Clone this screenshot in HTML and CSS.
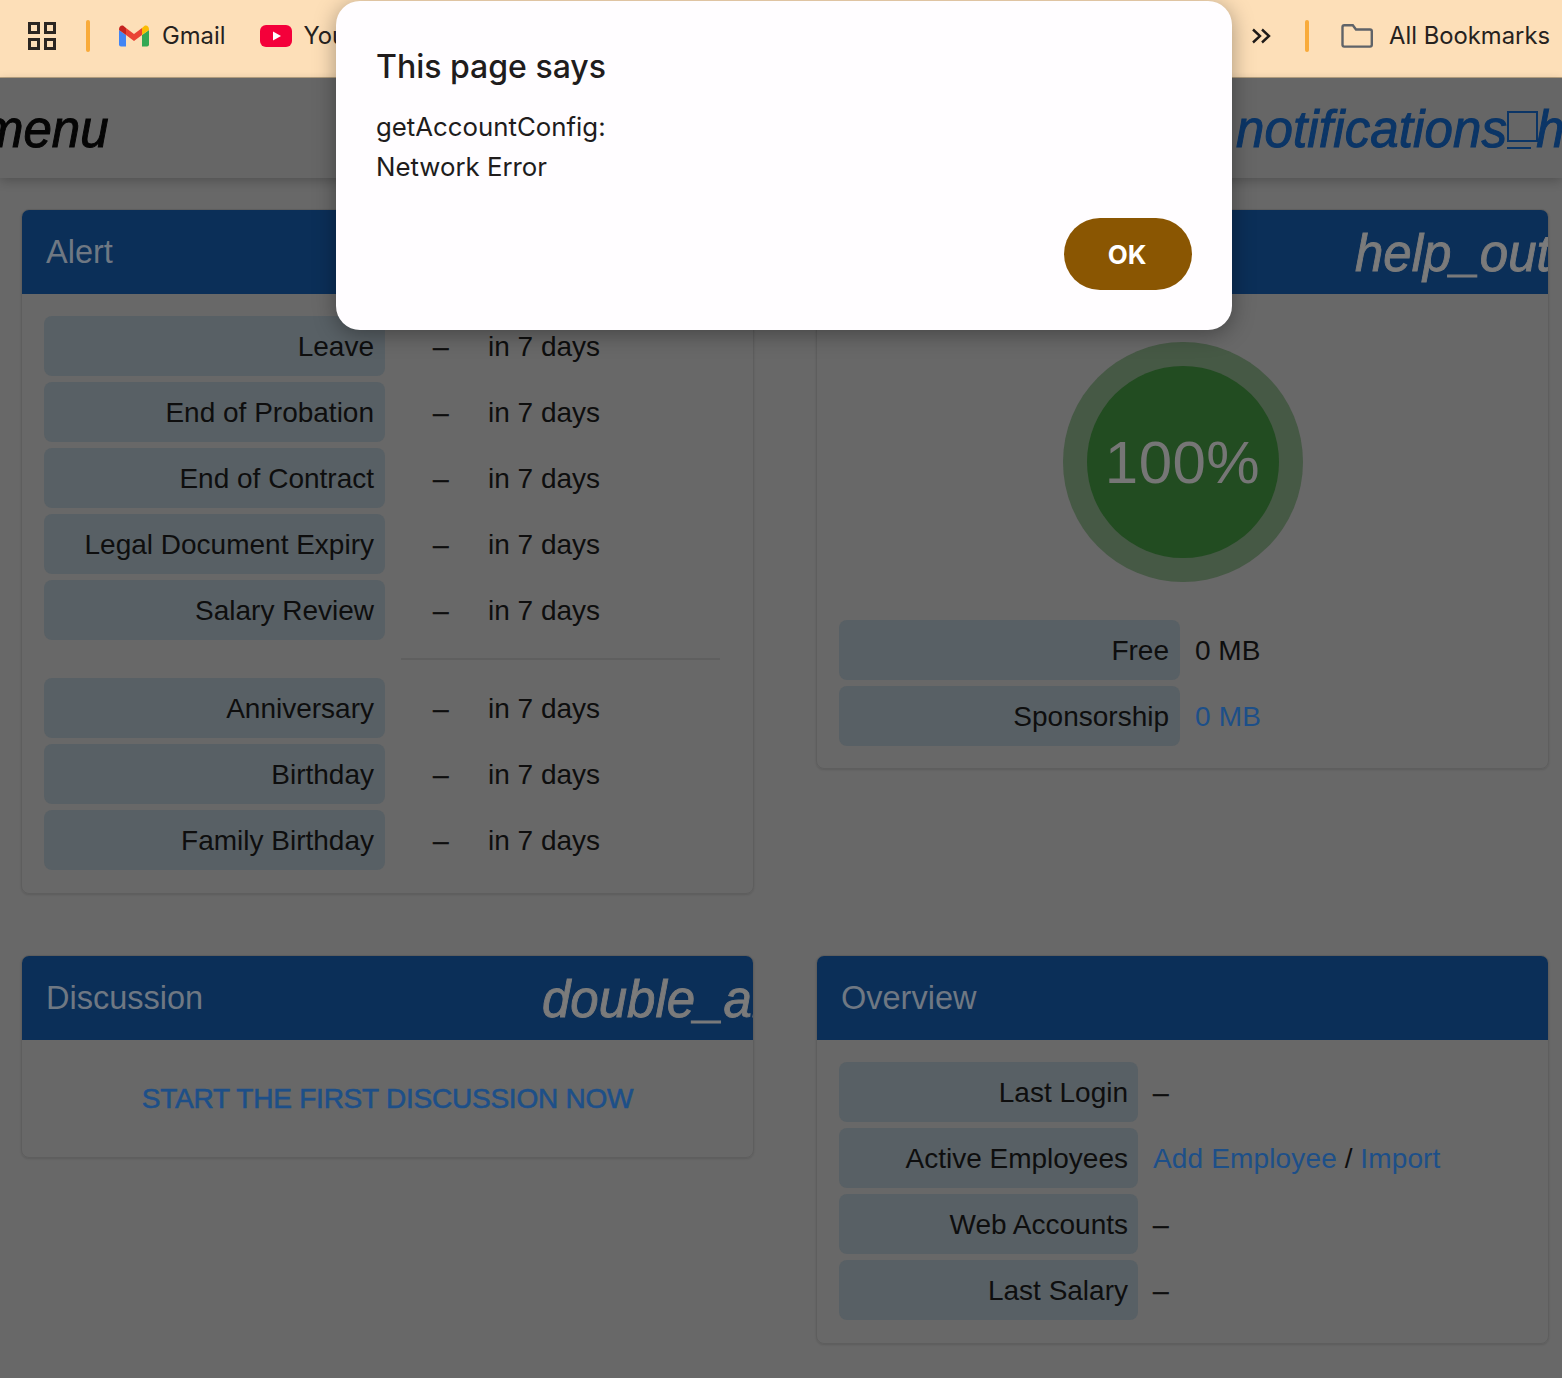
FILE: index.html
```html
<!DOCTYPE html>
<html lang="en">
<head>
<meta charset="utf-8">
<title>Dashboard</title>
<link rel="stylesheet" href="styles.css">
</head>
<body>
<div class="toolbar">
  <svg class="ic-apps" viewBox="0 0 28 28" width="28" height="28" fill="none" stroke="#2b2622" stroke-width="3"><rect x="1.500" y="1.500" width="9" height="9"/><rect x="17.500" y="1.500" width="9" height="9"/><rect x="1.500" y="17.500" width="9" height="9"/><rect x="17.500" y="17.500" width="9" height="9"/></svg>
  <span class="sep sep-left"></span>
  <svg class="ic-gmail" viewBox="0 0 30 22" width="30" height="22"><path d="M0 5v14.500q0 2 2 2h5V10z" fill="#4285f4"/><path d="M30 5v14.500q0 2-2 2h-5V10z" fill="#34a853"/><path d="M7 10 15 16 23 10V3L15 9 7 3z" fill="#ea4335"/><path d="M0 5Q0 0 4 .5L7 3v7z" fill="#c5221f"/><path d="M30 5q0-5-4-4.500L23 3v7z" fill="#fbbc04"/></svg>
  <span class="bm-text gmail-text">Gmail</span>
  <svg class="ic-yt" viewBox="0 0 32 22" width="32" height="22"><rect width="32" height="22" rx="6" fill="#f4003a"/><path d="M13 6.500 21 11l-8 4.500z" fill="#fff"/></svg>
  <span class="bm-text">YouTube</span>
  <div class="toolbar-right">
    <svg class="ic-more" viewBox="0 0 20 16" width="20" height="16" fill="none" stroke="#1f1b18" stroke-width="2.400"><path d="M2 1.500 9 8l-7 6.500M11 1.500 18 8l-7 6.500"/></svg>
    <span class="sep sep-right"></span>
    <svg class="ic-folder" viewBox="0 0 32 24" width="32" height="24" fill="none" stroke="#5f6368" stroke-width="2.400"><path d="M1.500 3q0-1.800 1.800-1.800h8.500L15 5.500h14q1.800 0 1.800 1.800v13.500q0 1.800-1.800 1.800H3.300q-1.800 0-1.800-1.800z"/></svg>
    <span class="bm-text">All Bookmarks</span>
  </div>
</div>

<header class="topbar">
  <span class="menu-icon">menu</span>
  <div class="top-actions"><span class="notif">notifications</span><span class="tofu"><span class="tofu-box"></span><span class="tofu-line"></span></span>help_outline</div>
</header>

<main class="grid">
  <section class="panel">
    <div class="panel-head"><span class="panel-title">Alert</span></div>
    <div class="panel-body">
      <div class="row"><span class="label">Leave</span><span class="dash">–</span><span class="val">in 7 days</span></div>
      <div class="row"><span class="label">End of Probation</span><span class="dash">–</span><span class="val">in 7 days</span></div>
      <div class="row"><span class="label">End of Contract</span><span class="dash">–</span><span class="val">in 7 days</span></div>
      <div class="row"><span class="label">Legal Document Expiry</span><span class="dash">–</span><span class="val">in 7 days</span></div>
      <div class="row"><span class="label">Salary Review</span><span class="dash">–</span><span class="val">in 7 days</span></div>
      <div class="divider"></div>
      <div class="row"><span class="label">Anniversary</span><span class="dash">–</span><span class="val">in 7 days</span></div>
      <div class="row"><span class="label">Birthday</span><span class="dash">–</span><span class="val">in 7 days</span></div>
      <div class="row"><span class="label">Family Birthday</span><span class="dash">–</span><span class="val">in 7 days</span></div>
    </div>
  </section>

  <section class="panel">
    <div class="panel-head"><span class="panel-title">Storage</span><span class="panel-icon icon-help">help_outline</span></div>
    <div class="panel-body storage-body">
      <div class="gauge"><div class="gauge-inner">100%</div></div>
      <div class="row"><span class="label">Free</span><span class="plain">0 MB</span></div>
      <div class="row"><span class="label">Sponsorship</span><a class="plain link" href="#">0 MB</a></div>
    </div>
  </section>

  <section class="panel">
    <div class="panel-head"><span class="panel-title">Discussion</span><span class="panel-icon icon-double">double_arrow</span></div>
    <div class="discussion-body"><a class="discussion-link" href="#">START THE FIRST DISCUSSION NOW</a></div>
  </section>

  <section class="panel">
    <div class="panel-head"><span class="panel-title">Overview</span></div>
    <div class="panel-body overview">
      <div class="row"><span class="label">Last Login</span><span class="plain dash-plain">–</span></div>
      <div class="row"><span class="label">Active Employees</span><span class="plain"><a class="link" href="#">Add Employee</a> / <a class="link" href="#">Import</a></span></div>
      <div class="row"><span class="label">Web Accounts</span><span class="plain dash-plain">–</span></div>
      <div class="row"><span class="label">Last Salary</span><span class="plain dash-plain">–</span></div>
    </div>
  </section>
</main>

<div class="dialog" role="alertdialog">
  <h2 class="dialog-title">This page says</h2>
  <p class="dialog-msg">getAccountConfig:<br>Network Error</p>
  <div class="dialog-actions"><button class="ok">OK</button></div>
</div>
</body>
</html>
```

FILE: styles.css
```css
* { box-sizing: border-box; }
html, body { margin: 0; padding: 0; }
body {
  width: 1562px;
  height: 1378px;
  overflow: hidden;
  background: #686868;
  font-family: "Liberation Sans", Arial, sans-serif;
  font-size: 28px;
  color: #0e0e0e;
  position: relative;
}

/* browser bookmarks bar */
.toolbar {
  height: 78px;
  background: #fddfb8;
  border-bottom: 1px solid #b9a383;
  display: flex;
  align-items: center;
  padding: 0 12px 6px 28px;
  font-family: Inter, "Liberation Sans", sans-serif;
  white-space: nowrap;
}
.toolbar-right { margin-left: auto; display: flex; align-items: center; }
.bm-text { font-size: 23.800px; color: #26221e; }
.sep { width: 4px; height: 32px; border-radius: 2px; background: #f9ab3a; flex: none; }
.sep-left { margin: 0 29px 0 30px; }
.sep-right { margin: 0 32px 0 34px; }
.ic-gmail { margin-right: 13px; flex: none; }
.gmail-text { margin-right: 34px; }
.ic-yt { margin-right: 12px; flex: none; }
.ic-folder { margin-right: 16px; flex: none; }

/* app top bar */
.topbar {
  height: 100px;
  padding-top: 3px;
  background: #666;
  box-shadow: 0 3px 10px rgba(0,0,0,.22);
  display: flex;
  align-items: center;
  justify-content: space-between;
  font-size: 51px;
  font-style: italic;
  overflow: hidden;
  white-space: nowrap;
}
.menu-icon { margin-left: -19px; color: #050505; -webkit-text-stroke: 1px #050505; }
.top-actions {
  width: 326px;
  overflow: hidden;
  color: #0b3566;
  -webkit-text-stroke: 1px #0b3566;
  display: flex;
  align-items: center;
}
.notif { letter-spacing: .15px; flex: none; }
.tofu { display: inline-flex; flex-direction: column; gap: 5px; width: 29px; flex: none; padding-top: 1px; }
.tofu-box { width: 31px; height: 31px; flex: none; border: 2px solid #0b3566; }
.tofu-line { width: 24px; height: 2px; background: #0b3566; }

/* dashboard */
.grid {
  display: grid;
  grid-template-columns: 733px 733px;
  column-gap: 62px;
  row-gap: 61px;
  padding: 31px 13px 0 21px;
  align-items: start;
}
.panel {
  border: 1px solid #5e5e5e;
  border-radius: 8px;
  overflow: hidden;
  box-shadow: 0 1px 2px rgba(0,0,0,.12);
}
.panel-head {
  height: 84px;
  background: #0b2f58;
  display: flex;
  align-items: center;
  padding-left: 24px;
  overflow: hidden;
  white-space: nowrap;
}
.panel-title { flex: 1; font-size: 32.500px; color: #6f7883; }
.panel-icon {
  font-size: 51px;
  font-style: italic;
  color: #7b7b7b;
  overflow: hidden;
  flex: none;
  padding-top: 2px;
  -webkit-text-stroke: .9px #7b7b7b;
}
.icon-help { width: 193px; }
.icon-double { width: 211px; }
.panel-body { padding: 22px 22px 23px; display: flex; flex-direction: column; gap: 6px; }
.row { display: flex; align-items: center; height: 60px; }
.label {
  width: 341px;
  height: 60px;
  line-height: 62px;
  background: #586065;
  border-radius: 8px;
  text-align: right;
  padding-right: 11px;
  white-space: nowrap;
  flex: none;
}
.dash { margin-left: 48px; width: 55px; flex: none; padding-top: 2px; -webkit-text-stroke: .5px #0e0e0e; }
.val { white-space: nowrap; padding-top: 2px; }
.plain { margin-left: 15px; white-space: nowrap; padding-top: 2px; }
.dash-plain { -webkit-text-stroke: .5px #0e0e0e; }
.link { color: #1d4f88; text-decoration: none; letter-spacing: .15px; }
.divider { height: 2px; width: 319px; margin: 12px 0 12px 357px; background: #5f5f5f; }

.storage-body { padding-top: 48px; padding-bottom: 22px; }
.gauge {
  width: 240px;
  height: 240px;
  border-radius: 50%;
  background: #465945;
  align-self: center;
  padding: 24px;
  margin-bottom: 32px;
}
.gauge-inner {
  width: 192px;
  height: 192px;
  border-radius: 50%;
  background: #224c21;
  color: #767676;
  font-size: 60px;
  letter-spacing: .5px;
  display: flex;
  align-items: center;
  justify-content: center;
}
.overview .label { width: 299px; padding-right: 10px; }

.discussion-body { height: 117px; display: flex; align-items: center; justify-content: center; }
.discussion-link { color: #1d4f88; font-size: 28px; letter-spacing: -.23px; -webkit-text-stroke: .6px #1d4f88; text-decoration: none; }

/* alert dialog */
.dialog {
  position: absolute;
  top: 1px;
  left: 336px;
  width: 896px;
  height: 329px;
  background: #fffdff;
  border-radius: 24px;
  box-shadow: 0 4px 22px rgba(0,0,0,.35);
  padding: 44px 40px 40px 40px;
  display: flex;
  flex-direction: column;
  font-family: Inter, "Liberation Sans", sans-serif;
  color: #201c1c;
}
.dialog-title { margin: 0; font-size: 32px; line-height: 44px; font-weight: 500; }
.dialog-msg { margin: 18px 0 0; font-size: 25.800px; line-height: 40px; }
.dialog-actions { margin-top: auto; display: flex; justify-content: flex-end; }
.ok {
  width: 128px;
  height: 72px;
  padding: 0 2px 0 0;
  border: 0;
  border-radius: 36px;
  background: #8a5602;
  color: #fff;
  font: 700 26px Inter, "Liberation Sans", sans-serif;
}
```
